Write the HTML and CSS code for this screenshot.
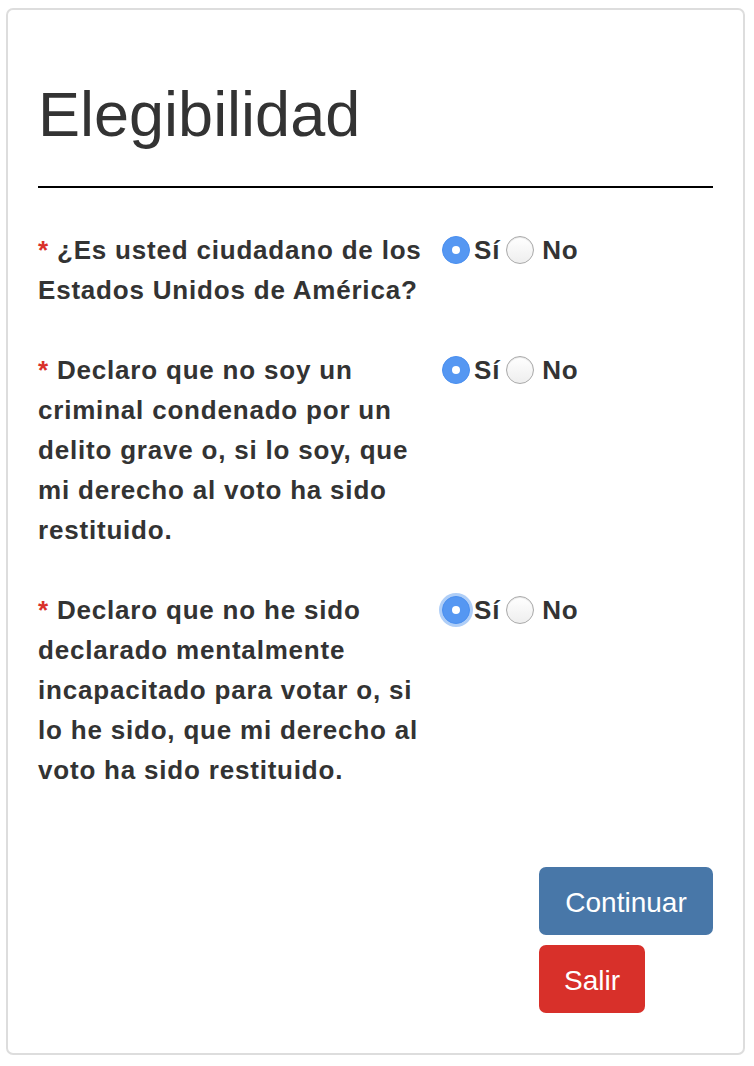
FILE: index.html
```html
<!DOCTYPE html>
<html lang="es">
  <head>
    <meta charset="UTF-8" />
    <meta name="viewport" content="width=device-width, initial-scale=1.0" />
    <title>Elegibilidad</title>
    <link rel="stylesheet" href="styles.css">
  </head>
  <body>
    <section class="tarjeta">
      <h1>Elegibilidad</h1>
      <hr />

      <form class="preguntas">
        <div class="pregunta">
          <p class="texto requerido">¿Es usted ciudadano de los Estados Unidos de América?</p>
          <div class="opciones">
            <label><input type="radio" name="ciudadano" checked /> Sí</label>
            <label><input type="radio" name="ciudadano" /> No</label>
          </div>
        </div>

        <div class="pregunta">
          <p class="texto requerido">Declaro que no soy un criminal condenado por un delito grave o, si lo soy, que mi derecho al voto ha sido restituido.</p>
          <div class="opciones">
            <label><input type="radio" name="criminal" checked /> Sí</label>
            <label><input type="radio" name="criminal" /> No</label>
          </div>
        </div>

        <div class="pregunta">
          <p class="texto requerido">Declaro que no he sido declarado mentalmente incapacitado para votar o, si lo he sido, que mi derecho al voto ha sido restituido.</p>
          <div class="opciones">
            <label><input type="radio" name="mental" class="enfoque" checked /> Sí</label>
            <label><input type="radio" name="mental" /> No</label>
          </div>
        </div>

        <div class="botones">
          <button type="button" class="btn continuar">Continuar</button>
          <button type="button" class="btn salir">Salir</button>
        </div>
      </form>
    </section>
  </body>
</html>
```

FILE: styles.css
```css
body {
  margin: 0;
  font-family: "Liberation Sans", Arial, sans-serif;
  color: #333;
  background: #fff;
}
.tarjeta {
  margin: 8px 9px 11px 6px;
  border: 2px solid #ddd;
  border-radius: 7px;
  padding: 70px 30px 38px 30px;
  height: 1047px;
  box-sizing: border-box;
}
h1 {
  margin: 0;
  font-size: 63px;
  line-height: 68px;
  font-weight: normal;
  color: #333;
}
hr {
  margin: 38px 0 42px 0;
  border: 0;
  height: 2px;
  background: #000;
}
.pregunta {
  display: grid;
  grid-template-columns: 394px 1fr;
  column-gap: 10px;
  margin-bottom: 40px;
}
.texto {
  margin: 0;
  font-size: 26px;
  line-height: 40px;
  font-weight: bold;
  letter-spacing: 0.8px;
}
.requerido::before {
  content: "* ";
  color: #d9302a;
}
.opciones {
  display: flex;
  align-items: center;
  height: 40px;
  gap: 6px;
  font-size: 26px;
  font-weight: bold;
  letter-spacing: 0.8px;
}
.opciones label {
  display: flex;
  align-items: center;
  gap: 4px;
}
.opciones label + label {
  gap: 8px;
}
input[type="radio"] {
  appearance: none;
  -webkit-appearance: none;
  margin: 0;
  width: 28px;
  height: 28px;
  border-radius: 50%;
  border: 1px solid #aaa;
  background: linear-gradient(#fff, #eee);
  box-shadow: inset 0 1px 1px rgba(0, 0, 0, 0.1);
  position: relative;
}
input[type="radio"]:checked {
  border-color: #4a8ff0;
  background: #5597f2;
  box-shadow: none;
}
input[type="radio"]:checked::after {
  content: "";
  position: absolute;
  left: 9px;
  top: 9px;
  width: 8px;
  height: 8px;
  border-radius: 50%;
  background: #fff;
}
input.enfoque:checked {
  box-shadow: 0 0 0 3px rgba(110, 165, 240, 0.55);
}
.botones {
  display: flex;
  flex-direction: column;
  align-items: flex-start;
  gap: 10px;
  width: 174px;
  margin: 77px 0 0 auto;
}
.btn {
  font-family: "Liberation Sans", Arial, sans-serif;
  font-size: 28px;
  color: #fff;
  border: 0;
  border-radius: 7px;
  height: 68px;
  padding: 3px 25px 0 25px;
  cursor: pointer;
}
.continuar {
  background: #4877a8;
  width: 174px;
}
.salir {
  background: #d8302a;
  width: 106px;
}
```
